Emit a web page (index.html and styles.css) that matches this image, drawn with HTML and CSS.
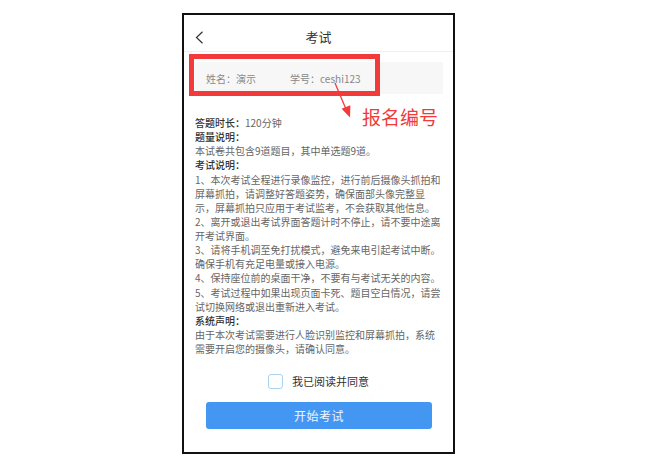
FILE: index.html
```html
<!DOCTYPE html>
<html lang="zh-CN">
<head>
<meta charset="utf-8">
<title>考试</title>
<link rel="stylesheet" href="styles.css">
</head>
<body>
<div class="phone">
  <header class="nav">
    <svg class="back" width="9" height="13" viewBox="0 0 9 13"><path d="M7.5 0.8 L1.5 6.5 L7.5 12.2" fill="none" stroke="#333" stroke-width="1.2"/></svg>
    <div class="title">考试</div>
  </header>
  <div class="info">
    <span class="name">姓名：演示</span>
    <span class="sid">学号：ceshi123</span>
  </div>
  <div class="rules">
    <p><b>答题时长：</b>120分钟</p>
    <p><b>题量说明：</b></p>
    <p>本试卷共包含9道题目，其中单选题9道。</p>
    <p><b>考试说明：</b></p>
    <p>1、本次考试全程进行录像监控，进行前后摄像头抓拍和屏幕抓拍，请调整好答题姿势，确保面部头像完整显示，屏幕抓拍只应用于考试监考，不会获取其他信息。</p>
    <p>2、离开或退出考试界面答题计时不停止，请不要中途离开考试界面。</p>
    <p>3、请将手机调至免打扰模式，避免来电引起考试中断。确保手机有充足电量或接入电源。</p>
    <p>4、保持座位前的桌面干净，不要有与考试无关的内容。</p>
    <p>5、考试过程中如果出现页面卡死、题目空白情况，请尝试切换网络或退出重新进入考试。</p>
    <p><b>系统声明：</b></p>
    <p>由于本次考试需要进行人脸识别监控和屏幕抓拍，系统需要开启您的摄像头，请确认同意。</p>
  </div>
  <label class="agree"><span class="box"></span><span>我已阅读并同意</span></label>
  <button class="start">开始考试</button>

  <div class="mark"></div>
  <svg class="arrow" width="24" height="40" viewBox="0 0 24 40"><path d="M3 2 L13.5 27" stroke="#f23a3a" stroke-width="1.3" fill="none"/><path d="M9.6 27.8 L18.4 24.2 L18 36.5 Z" fill="#f23a3a"/></svg>
  <div class="note">报名编号</div>
</div>
</body>
</html>
```
FILE: styles.css
```css
html, body {
  margin: 0;
  padding: 0;
  background: #fff;
}
body {
  font-family: "Noto Sans CJK SC", "Noto Sans", sans-serif;
  color: #333;
}
.phone {
  position: relative;
  box-sizing: border-box;
  margin: 13px 0 0 182px;
  width: 273px;
  height: 441px;
  border: 2px solid #111;
  display: flex;
  flex-direction: column;
}
.nav {
  position: relative;
  height: 37px;
  box-sizing: border-box;
  border-bottom: 1px solid #f0f0f0;
  display: flex;
  align-items: center;
  justify-content: center;
  padding-top: 7px;
}
.back {
  position: absolute;
  left: 11px;
  top: 16px;
}
.title {
  font-size: 13px;
  line-height: 16px;
  color: #333;
}
.info {
  margin: 10px 10px 0 11px;
  height: 32px;
  background: #f7f7f7;
  display: flex;
  align-items: center;
  padding-left: 11px;
  font-size: 10px;
  color: #888;
}
.info .name {
  width: 84px;
}
.rules {
  margin: 22px 10px 0 11px;
  font-size: 10px;
  line-height: 14.12px;
  color: #666;
}
.rules p {
  margin: 0;
}
.rules b {
  color: #333;
  font-weight: 500;
}
.agree {
  margin-top: 17px;
  display: flex;
  align-items: center;
  justify-content: center;
  gap: 9px;
  font-size: 11px;
  color: #333;
}
.box {
  width: 13px;
  height: 13px;
  border: 1px solid #a9d3f0;
  border-radius: 3px;
  background: #fff;
}
.start {
  margin: 13px 0 0 22px;
  width: 226px;
  height: 27px;
  border: 0;
  border-radius: 3px;
  background: #4397f3;
  color: #eef6ff;
  font-family: "Noto Sans CJK SC", sans-serif;
  font-size: 12px;
  letter-spacing: 0.5px;
  padding: 0;
}
.mark {
  position: absolute;
  left: 5px;
  top: 39px;
  width: 191px;
  height: 42px;
  box-sizing: border-box;
  border: 5px solid #f23a3a;
}
.arrow {
  position: absolute;
  left: 148px;
  top: 66px;
}
.note {
  position: absolute;
  left: 178px;
  top: 90px;
  font-size: 19px;
  line-height: 24px;
  color: #f23a3a;
  white-space: nowrap;
}
```
